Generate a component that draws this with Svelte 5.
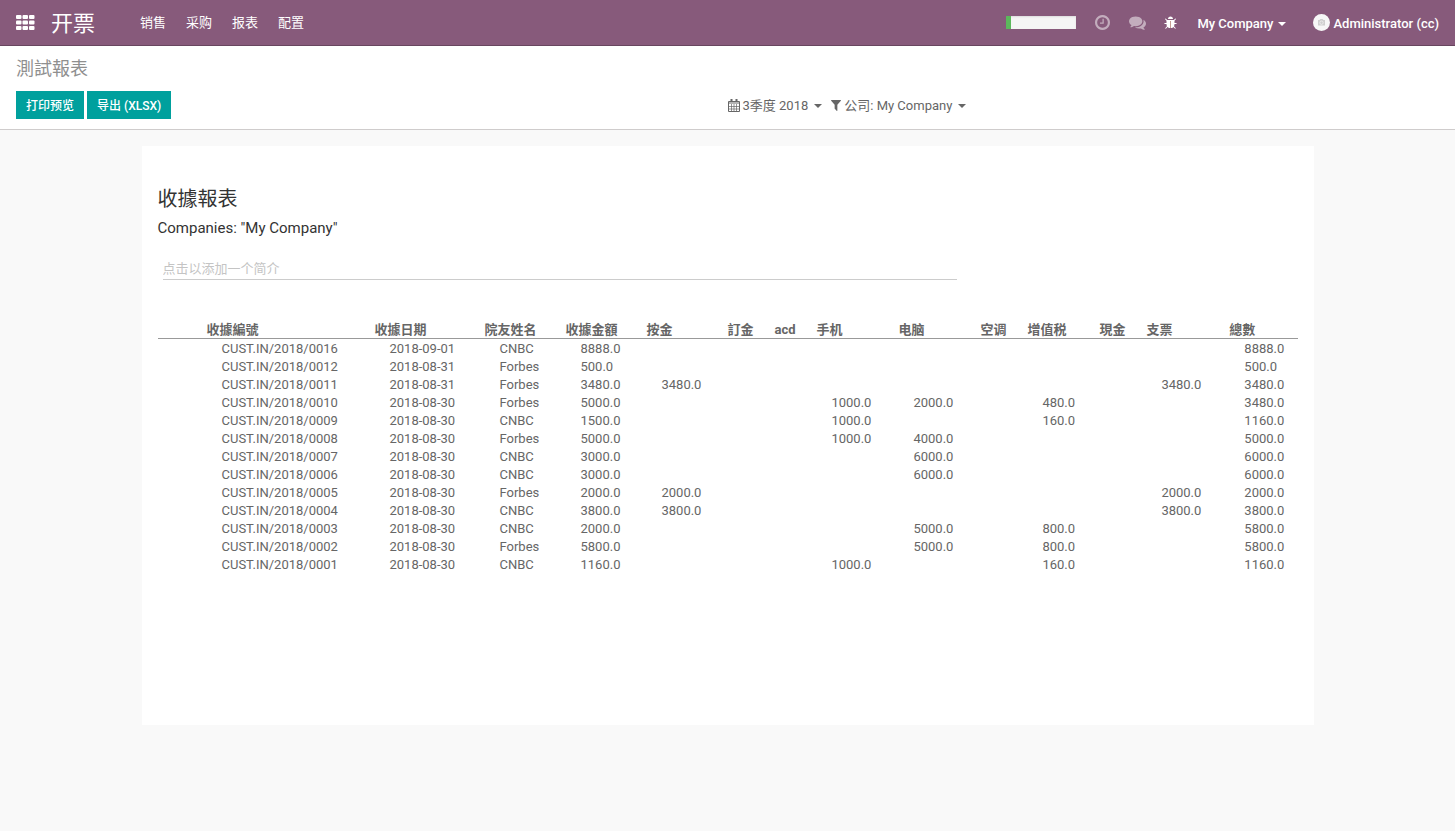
<script>
  const menus = ['销售', '采购', '报表', '配置'];
  const columns = [
    { name: '', width: 49 },
    { name: '收據編號', width: 168 },
    { name: '收據日期', width: 110 },
    { name: '院友姓名', width: 81 },
    { name: '收據金額', width: 81 },
    { name: '按金', width: 81 },
    { name: '訂金', width: 47 },
    { name: 'acd', width: 42 },
    { name: '手机', width: 82 },
    { name: '电脑', width: 82 },
    { name: '空调', width: 47 },
    { name: '增值税', width: 72 },
    { name: '現金', width: 47 },
    { name: '支票', width: 83 },
    { name: '總數', width: 68 }
  ];
  const total = columns.reduce((sum, c) => sum + c.width, 0);
  const receipts = [
    { no: '0016', date: '2018-09-01', who: 'CNBC', amount: '8888.0', sum: '8888.0' },
    { no: '0012', date: '2018-08-31', who: 'Forbes', amount: '500.0', sum: '500.0' },
    { no: '0011', date: '2018-08-31', who: 'Forbes', amount: '3480.0', deposit: '3480.0', cheque: '3480.0', sum: '3480.0' },
    { no: '0010', date: '2018-08-30', who: 'Forbes', amount: '5000.0', phone: '1000.0', pc: '2000.0', vat: '480.0', sum: '3480.0' },
    { no: '0009', date: '2018-08-30', who: 'CNBC', amount: '1500.0', phone: '1000.0', vat: '160.0', sum: '1160.0' },
    { no: '0008', date: '2018-08-30', who: 'Forbes', amount: '5000.0', phone: '1000.0', pc: '4000.0', sum: '5000.0' },
    { no: '0007', date: '2018-08-30', who: 'CNBC', amount: '3000.0', pc: '6000.0', sum: '6000.0' },
    { no: '0006', date: '2018-08-30', who: 'CNBC', amount: '3000.0', pc: '6000.0', sum: '6000.0' },
    { no: '0005', date: '2018-08-30', who: 'Forbes', amount: '2000.0', deposit: '2000.0', cheque: '2000.0', sum: '2000.0' },
    { no: '0004', date: '2018-08-30', who: 'CNBC', amount: '3800.0', deposit: '3800.0', cheque: '3800.0', sum: '3800.0' },
    { no: '0003', date: '2018-08-30', who: 'CNBC', amount: '2000.0', pc: '5000.0', vat: '800.0', sum: '5800.0' },
    { no: '0002', date: '2018-08-30', who: 'Forbes', amount: '5800.0', pc: '5000.0', vat: '800.0', sum: '5800.0' },
    { no: '0001', date: '2018-08-30', who: 'CNBC', amount: '1160.0', phone: '1000.0', vat: '160.0', sum: '1160.0' }
  ];
  const cells = (r) => [
    '', 'CUST.IN/2018/' + r.no, r.date, r.who, r.amount, r.deposit, '', '',
    r.phone, r.pc, '', r.vat, '', r.cheque, r.sum
  ];
</script>

<header class="navbar">
  <button class="apps" aria-label="Apps">
    <svg width="19" height="15" viewBox="0 0 19 15" fill="#fff">
      {#each [0, 5.5, 11] as y}
        {#each [0, 6.5, 13] as x}
          <rect {x} {y} width="5.5" height="4" rx="1" />
        {/each}
      {/each}
    </svg>
  </button>
  <a class="brand" href="#home">开票</a>
  <nav>
    {#each menus as menu}<a href="#menu">{menu}</a>{/each}
  </nav>
  <div class="systray">
    <div class="planner" role="progressbar" aria-label="Planner" aria-valuenow="7" aria-valuemin="0" aria-valuemax="100"><span style="width: 7%"></span></div>
    <button class="dim clock" aria-label="Activities">
      <svg width="15" height="15" viewBox="0 128 1536 1536" fill="currentColor"><path d="M896 544v448q0 14-9 23t-23 9h-320q-14 0-23-9t-9-23v-64q0-14 9-23t23-9h224v-352q0-14 9-23t23-9h64q14 0 23 9t9 23zm416 352q0-148-73-273t-198-198-273-73-273 73-198 198-73 273 73 273 198 198 273 73 273-73 198-198 73-273zm224 0q0 209-103 385.5t-279.5 279.5-385.5 103-385.5-103-279.5-279.5-103-385.5 103-385.5 279.5-279.5 385.5-103 385.5 103 279.5 279.5 103 385.5z" /></svg>
    </button>
    <button class="dim chat" aria-label="Messages">
      <svg width="17" height="17" viewBox="0 0 1792 1792" fill="currentColor"><path d="M1408 768q0 139-94 257t-256.5 186.5-353.5 68.5q-86 0-176-16-124 88-278 128-36 9-86 16h-3q-11 0-20.5-8t-11.5-21q-1-3-1-6.5t.5-6.5 2-6l2.5-5 3.5-5.5 4-5 4.5-5 4-4.5q5-6 23-25t26-29.5 22.5-29 25-38.5 20.5-44q-124-72-195-177t-71-224q0-139 94-257t256.5-186.5 353.5-68.5 353.5 68.5 256.5 186.5 94 257zm384 256q0 120-71 224.5t-195 176.5q10 24 20.5 44t25 38.5 22.5 29 26 29.5 23 25q1 1 4 4.5t4.5 5 4 5 3.5 5.5l2.5 5 2 6 .5 6.5-1 6.5q-3 14-13 22t-22 7q-50-7-86-16-154-40-278-128-90 16-176 16-271 0-472-132 58 4 88 4 161 0 309-45t264-129q125-92 192-212t67-254q0-77-23-152 129 71 204 178t75 230z" /></svg>
    </button>
    <button class="bug" aria-label="Debug">
      <svg width="14" height="14" viewBox="0 0 1792 1792" fill="currentColor"><path fill="#f0cfa4" d="M820 640h150v900h-150z" /><path d="M1632 960q0 26-19 45t-45 19h-224q0 171-67 290l208 209q19 19 19 45t-19 45q-18 19-45 19t-45-19l-198-197q-5 5-15 13t-42 28.5-65 36.5-82 29-97 13v-896h-128v896q-51 0-101.5-13.5t-87-33-66-39-43.5-32.5l-15-14-183 207q-20 21-48 21-24 0-43-16-19-18-20.5-44.5t15.5-46.5l202-227q-58-114-58-274h-224q-26 0-45-19t-19-45 19-45 45-19h224v-294l-173-173q-19-19-19-45t19-45 45-19 45 19l173 173h844l173-173q19-19 45-19t45 19 19 45-19 45l-173 173v294h224q26 0 45 19t19 45zm-480-576h-640q0-133 93.5-226.5t226.5-93.5 226.5 93.5 93.5 226.5z" /></svg>
    </button>
    <button class="label company">My Company<i class="caret"></i></button>
    <button class="user">
      <svg width="17" height="17" viewBox="0 0 17 17"><circle cx="8.5" cy="8.5" r="8.5" fill="#f7f7f7" /><path fill="#cfcfcf" d="M5 6h1.500l1-1h2l1 1h1.500v5.500h-7z" /><circle cx="8.5" cy="8.7" r="1.7" fill="#cfcfcf" stroke="#f4f4f4" stroke-width=".7" /></svg>
      <span class="label">Administrator (cc)</span>
    </button>
  </div>
</header>

<section class="panel">
  <h1>測試報表</h1>
  <div class="row">
    <div class="half actions">
      <button class="primary">打印预览</button>
      <button class="primary">导出 (XLSX)</button>
    </div>
    <div class="half filters">
      <button>
        <svg class="cal" width="12" height="13" viewBox="0 0 12 13" fill="none" stroke="currentColor">
          <path d="M.5 2.500h11v10H.5z" /><path d="M1 4h10" />
          <path d="M3.500 5v7M6 5v7M8.500 5v7M1 7.500h10M1 10h10" stroke-width=".7" />
          <path d="M3.500 0v3M8.500 0v3" stroke-width="2" />
        </svg>
        <span class="label">3季度 2018<i class="caret"></i></span>
      </button>
      <button>
        <svg class="funnel" width="10" height="11" viewBox="190 256 1412 1408" preserveAspectRatio="none" fill="currentColor"><path d="M1595 295q17 41-14 70l-493 493v742q0 42-39 59-13 5-25 5-27 0-45-19l-256-256q-19-19-19-45v-486l-493-493q-31-29-14-70 17-39 59-39h1280q42 0 59 39z" /></svg>
        <span class="label">公司: My Company<i class="caret"></i></span>
      </button>
    </div>
  </div>
</section>

<main>
  <article>
    <h2>收據報表</h2>
    <h3>Companies: "My Company"</h3>
    <input class="summary" type="text" aria-label="简介" placeholder="点击以添加一个简介" />
    <table>
      <colgroup>
        {#each columns as c}<col style="width: {(c.width / total) * 100}%" />{/each}
      </colgroup>
      <thead>
        <tr>{#each columns as c}<th scope="col">{c.name}</th>{/each}</tr>
      </thead>
      <tbody>
        {#each receipts as r}
          <tr>{#each cells(r) as value}<td>{value ?? ''}</td>{/each}</tr>
        {/each}
      </tbody>
    </table>
  </article>
</main>

<style>
  :global(body) {
    background: #f9f9f9;
    color: #666;
    font: 13px/18px Roboto, "Noto Sans CJK SC", sans-serif;
  }
  button {
    display: flex;
    align-items: center;
    padding: 0;
    border: 0;
    background: none;
    color: inherit;
    font: inherit;
    white-space: nowrap;
    cursor: pointer;
  }
  a { color: inherit; text-decoration: none; }
  svg { display: block; flex: none; }
  .label { display: flex; align-items: center; padding-top: 2px; }
  .caret {
    margin-left: 5px;
    border: 4px solid transparent;
    border-top-color: currentColor;
    border-bottom: 0;
  }
  .navbar {
    display: flex;
    align-items: center;
    height: 45px;
    padding: 0 16px;
    border-bottom: 1px solid #68465f;
    background: #875a7b;
    color: #fff;
  }
  .brand { margin-left: 16px; padding-top: 2px; font-size: 22px; line-height: 43px; }
  nav { display: flex; gap: 20px; margin-left: 45px; padding-top: 1px; }
  .systray {
    display: flex;
    align-items: center;
    margin-left: auto;
    font-weight: 500;
  }
  .planner {
    display: flex;
    width: 70px;
    height: 13px;
    background: #f5f5f5;
    box-shadow: inset 0 1px 2px rgba(0, 0, 0, 0.1);
  }
  .planner span { background: #5cb85c; }
  .dim { color: #c3adbd; }
  .clock { margin-left: 19px; }
  .chat { margin-left: 19px; }
  .bug { margin-left: 18px; }
  .company { margin-left: 19px; }
  .user { gap: 3px; margin-left: 27px; }

  .panel {
    padding: 12px 16px 10px;
    border-bottom: 1px solid #cfcccc;
    background: #fff;
  }
  h1, h2, h3 { margin: 0; font-weight: 400; }
  h1 { color: #8f8f8f; font-size: 18px; line-height: 22px; }
  .row { display: flex; margin-top: 11px; }
  .half { display: flex; flex: 1; align-items: center; }
  .actions { gap: 3px; }
  .filters { gap: 9px; }
  .filters .caret { margin-left: 6px; }
  .primary {
    height: 28px;
    padding: 2px 10px 0;
    background: #00a09d;
    color: #fff;
    font-size: 12px;
    font-weight: 500;
  }
  .cal, .funnel { margin-right: 3px; }

  main { padding: 16px; }
  article {
    box-sizing: border-box;
    max-width: 1172px;
    margin: 0 auto;
    padding: 40px 16px 152px;
    background: #fff;
  }
  h2 { color: #333; font-size: 20px; line-height: 26px; }
  h3 { margin-top: 6px; color: #333; font-size: 15px; line-height: 20px; }
  .summary {
    display: block;
    box-sizing: border-box;
    width: calc(70% - 4px);
    height: 22px;
    margin: 20px 0 0 5px;
    padding: 0;
    border: 0;
    border-bottom: 1px solid #ccc;
    border-radius: 0;
    background: none;
    color: #666;
    font: inherit;
    outline: 0;
  }
  .summary::placeholder { color: #c4c4c4; opacity: 1; }
  table {
    width: 100%;
    margin-top: 40px;
    border-spacing: 0;
    table-layout: fixed;
  }
  th, td {
    padding: 2px 0 0;
    line-height: 16px;
    text-align: left;
    white-space: nowrap;
  }
  th {
    border-bottom: 1px solid #999;
    font-weight: 700;
  }
  td { padding-left: 15px; }
  td:first-child { padding-left: 0; }
</style>
